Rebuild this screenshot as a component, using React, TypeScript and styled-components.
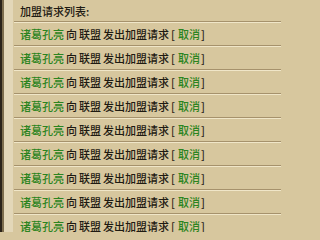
import React from 'react';
import styled, { createGlobalStyle } from 'styled-components';

const GlobalStyle = createGlobalStyle`
  html, body {
    margin: 0;
    padding: 0;
    background: #d7c79e;
  }
  body {
    font-family: "Noto Sans CJK SC", "Noto Sans", sans-serif;
  }
`;

const Frame = styled.div`
  width: 281px;
  height: 232px;
  overflow: hidden;
  background: linear-gradient(
    to right,
    #2b2319 0 2px,
    #7d6d4d 2px 4px,
    #e3d7b8 4px 13px,
    #d7c79e 13px
  );
`;

const List = styled.ul`
  list-style: none;
  margin: 0 0 0 14px;
  padding: 0;
`;

const Row = styled.li<{ $head?: boolean }>`
  display: flex;
  align-items: center;
  height: ${(p) => (p.$head ? '21px' : '22px')};
  padding-left: 6px;
  margin-bottom: 1px;
  border-bottom: 1px solid #a6926c;
  box-shadow: 0 1px 0 #f0e6c8;
  font-size: 11px;
  font-weight: 500;
  color: #1e1a12;
  white-space: nowrap;
`;

const Name = styled.span`
  color: #2b8420;
`;

const Gap = styled.span`
  display: inline-block;
  width: 2px;
`;

const Bracket = styled.span`
  color: #2a2418;
`;

const Cancel = styled.span`
  color: #2b8420;
  margin: 0 1px 0 3px;
`;

const requests = Array.from({ length: 9 }, () => ({ name: '诸葛孔亮', target: '联盟' }));

export default function App() {
  return (
    <>
      <GlobalStyle />
      <Frame>
        <List>
          <Row $head>加盟请求列表:</Row>
          {requests.map((r, i) => (
            <Row key={i}>
              <Name>{r.name}</Name>
              <Gap />向<Gap />
              {r.target}
              <Gap />发出加盟请求<Gap />
              <Bracket>[</Bracket>
              <Cancel>取消</Cancel>
              <Bracket>]</Bracket>
            </Row>
          ))}
        </List>
      </Frame>
    </>
  );
}
